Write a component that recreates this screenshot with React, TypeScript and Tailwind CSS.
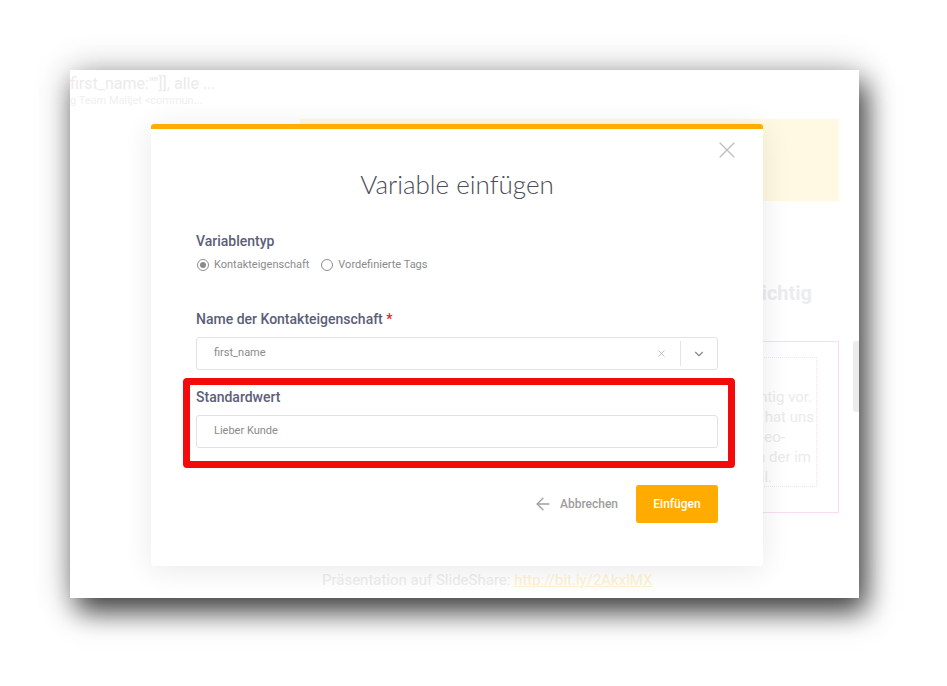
import React from 'react';
import { X, ChevronDown, ArrowLeft } from 'lucide-react';

const roboto = { fontFamily: 'Roboto, "Liberation Sans", sans-serif' };

const Radio: React.FC<{ checked?: boolean; label: string }> = ({ checked, label }) => (
  <label className="flex items-center gap-[5px]">
    <span className="flex h-[12px] w-[12px] items-center justify-center rounded-full border border-[#8f8f8f]">
      {checked && <span className="h-[6px] w-[6px] rounded-full bg-[#8a8a8a]" />}
    </span>
    <span className="text-[11px] leading-[16px] text-[#8b8b8b]">{label}</span>
  </label>
);

const BackgroundPage: React.FC = () => (
  <div className="flex h-full w-full">
    {/* left column, mail list */}
    <div className="w-[230px] shrink-0 pt-[5px]">
      <div className="whitespace-nowrap text-[16px] leading-[18px] text-[#ebebeb]">first_name:""]], alle ...</div>
      <div className="mt-[1px] whitespace-nowrap text-[11px] leading-[14px] text-[#efefef]">g Team Mailjet &lt;commun...</div>
    </div>

    {/* newsletter content */}
    <div className="w-[539px] shrink-0 pt-[49px]">
      <div className="h-[82px] bg-[#fff8e2]" />
      <div className="mt-[80px] flex justify-end pr-[27px] text-[20px] font-bold leading-[24px] text-[#ebecef]">
        Warum ist das wichtig
      </div>
      <div className="mt-[36px] h-[172px] border border-[#fadcf4] pt-[15px] pr-[21px]">
        <div className="ml-auto h-[130px] w-[470px] border border-dotted border-[#f5e4f1] pt-[29px] text-[15px] leading-[20px] text-[#ebebeb]">
          <div className="pr-[4px] text-right">Wir stellen Ihnen heute etwas ganz Wichtig vor.</div>
          <div className="pr-[2px] text-right">Unser Team hat uns</div>
          <div className="pr-[31px] text-right">ein Vid-eo-</div>
          <div className="pr-[5px] text-right">Tutorial, in der im</div>
          <div className="pr-[44px] text-right">Detail.</div>
        </div>
      </div>
      <div className="mt-[58px] whitespace-nowrap pl-[22px] text-[15px] leading-[18px] text-[#ececec]">
        Präsentation auf SlideShare: <span className="text-[#fef2d0] underline">http://bit.ly/2AkxlMX</span>
      </div>
    </div>

    <div className="ml-auto mt-[271px] h-[71px] w-[6px] rounded-l-[3px] bg-[#ececec]" />
  </div>
);

export default function App() {
  return (
    <div className="h-[686px] w-[947px] overflow-hidden bg-white pl-[70px] pt-[70px]" style={roboto}>
      <div className="relative h-[528px] w-[789px] overflow-hidden bg-white shadow-[0_0_34px_rgba(0,0,0,0.22),7px_14px_26px_rgba(0,0,0,0.7)]">
        <BackgroundPage />

        {/* modal */}
        <div className="absolute left-[81px] top-[54px] flex h-[442px] w-[612px] flex-col rounded-[3px] bg-white shadow-[0_4px_30px_rgba(0,0,0,0.09)]">
          <div className="h-[5px] rounded-t-[3px] bg-[#ffad00]" />
          <button className="absolute right-[22px] top-[12px] text-[#bdbdbd]">
            <X size={28} strokeWidth={1} />
          </button>

          <h2
            className="mt-[39px] text-center text-[26px] font-light leading-[32px] text-[#4b4c57]"
            style={{ fontFamily: 'Lato, "Open Sans", sans-serif' }}
          >
            Variable einfügen
          </h2>

          <div className="px-[45px]">
            <div className="mt-[31px] text-[14px] font-medium leading-[20px] text-[#5b5e78]">Variablentyp</div>
            <div className="mt-[6px] flex items-center gap-[12px] pl-[1px]">
              <Radio checked label="Kontakteigenschaft" />
              <Radio label="Vordefinierte Tags" />
            </div>

            <div className="mt-[36px] text-[14px] font-medium leading-[20px] text-[#5b5e78]">
              Name der Kontakteigenschaft <span className="text-[#f0142c]">*</span>
            </div>
            <div className="mt-[8px] flex h-[33px] items-center rounded-[3px] border border-[#e2e2e2] pl-[17px]">
              <span className="flex-1 text-[11px] text-[#8a8a8a]">first_name</span>
              <X size={11} strokeWidth={1.5} className="mr-[13px] text-[#a8a8a8]" />
              <span className="h-[25px] w-px bg-[#e4e4e4]" />
              <ChevronDown size={14} strokeWidth={2} className="mx-[11px] text-[#8a8a8a]" />
            </div>

            <div className="relative mt-[17px]">
              <div className="text-[14px] font-medium leading-[20px] text-[#5b5e78]">Standardwert</div>
              <div className="mt-[8px] flex h-[33px] items-center rounded-[3px] border border-[#e2e2e2] pl-[17px]">
                <span className="text-[11px] text-[#8a8a8a]">Lieber Kunde</span>
              </div>
              {/* annotation frame */}
              <div className="pointer-events-none absolute -bottom-[20px] -left-[13px] -right-[17px] -top-[9px] rounded-[4px] border-[7px] border-[#f30b0b]" />
            </div>

            <div className="mt-[37px] flex items-center justify-end">
              <button className="flex items-center gap-[7px] text-[12px] font-medium text-[#9d9d9d]">
                <ArrowLeft size={20} strokeWidth={1.6} className="text-[#a0a0a0]" />
                Abbrechen
              </button>
              <button className="ml-[18px] h-[38px] w-[82px] rounded-[3px] bg-[#ffab00] text-[12px] font-medium text-white">
                Einfügen
              </button>
            </div>
          </div>
        </div>
      </div>
    </div>
  );
}
